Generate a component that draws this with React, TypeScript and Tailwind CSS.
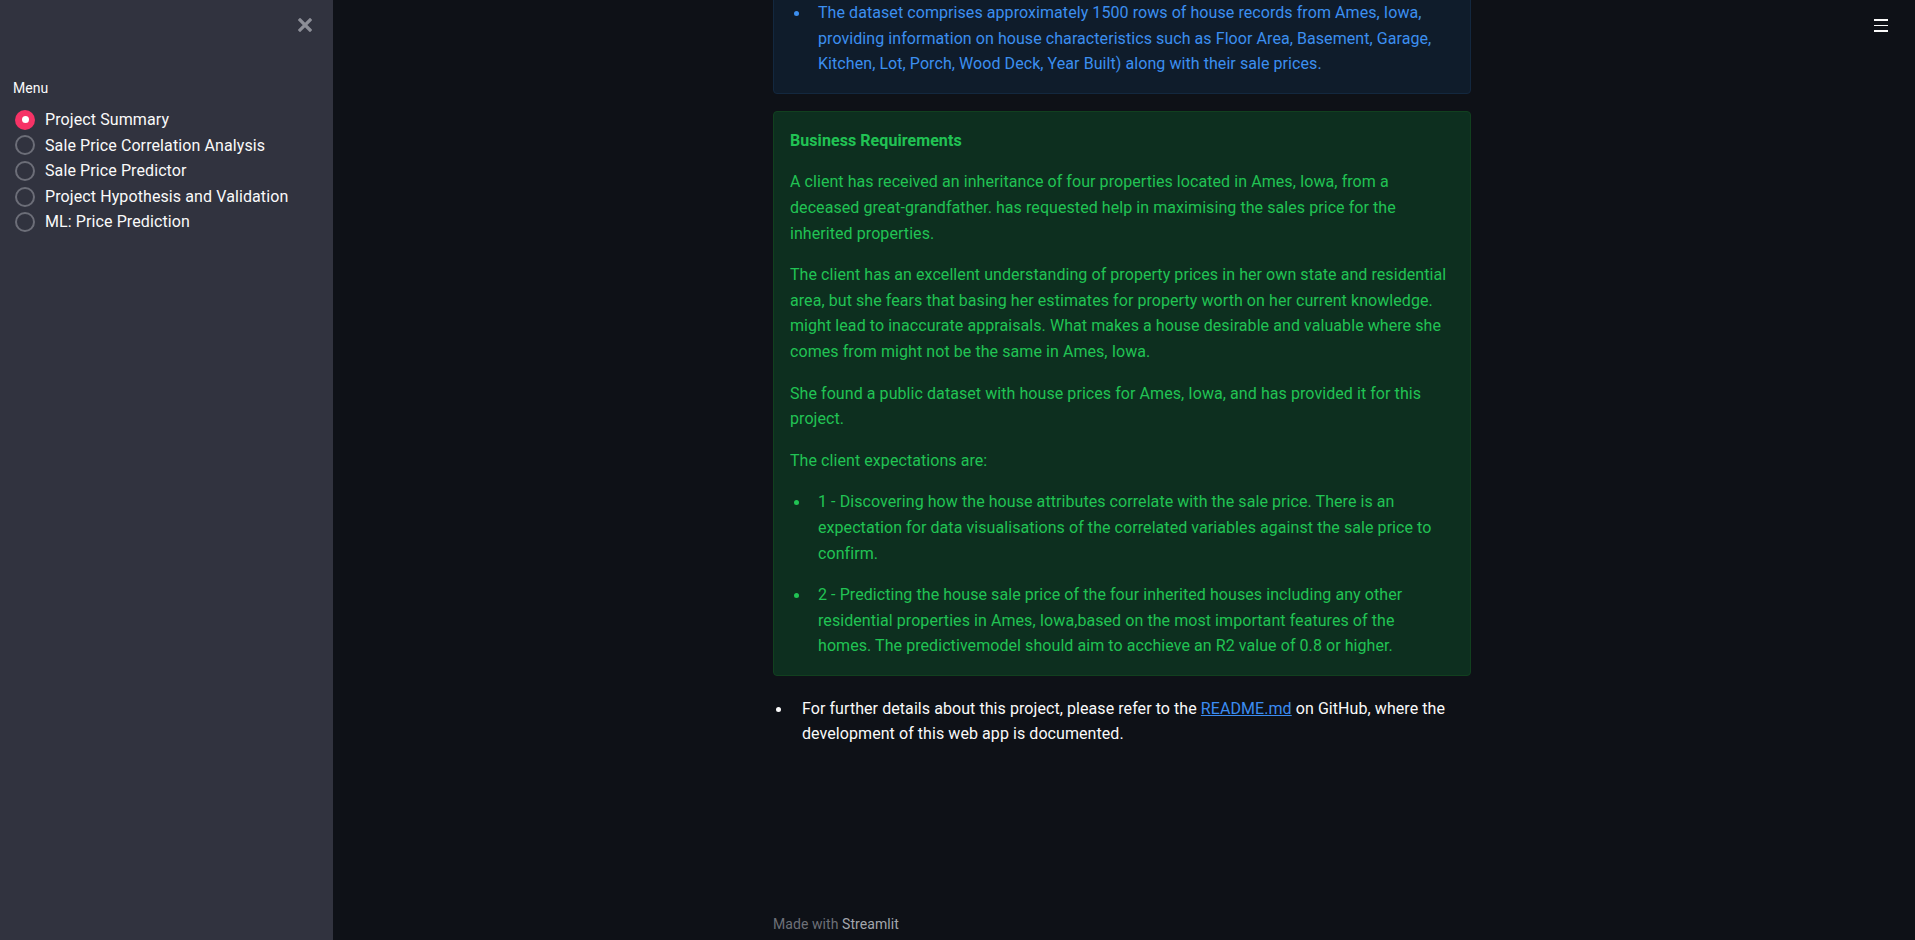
import React from "react";

const menuItems = [
  "Project Summary",
  "Sale Price Correlation Analysis",
  "Sale Price Predictor",
  "Project Hypothesis and Validation",
  "ML: Price Prediction",
];

const Bullet = ({ color, children }: { color: string; children: React.ReactNode }) => (
  <li className="flex">
    <span className="w-[28px] shrink-0 pl-[4px] pt-[11px]">
      <span className={`block h-[5px] w-[5px] rounded-full ${color}`} />
    </span>
    <span className="pr-[14px]">{children}</span>
  </li>
);

const Sidebar = () => {
  return (
    <aside className="w-[333px] shrink-0 h-screen bg-[#31333f] flex flex-col px-[13px] pt-[18px]">
      {/* close */}
      <div className="flex justify-end pr-[8px]">
        <svg width="14" height="14" viewBox="0 0 14 14" className="text-[#8c8e97]">
          <path d="M2 2L12 12M12 2L2 12" stroke="currentColor" strokeWidth="3.2" strokeLinecap="square" />
        </svg>
      </div>

      <p className="mt-[46px] text-[14px] leading-[20px] text-[#fafafa]">Menu</p>

      <div className="mt-[9px] flex flex-col">
        {menuItems.map((item, i) => (
          <div key={item} className="h-[25.6px] flex items-center gap-[10px] pl-[2px]">
            {i === 0 ? (
              <span className="w-[20px] h-[20px] rounded-full bg-[#f63366] flex items-center justify-center">
                <span className="w-[7px] h-[7px] rounded-full bg-white" />
              </span>
            ) : (
              <span className="w-[20px] h-[20px] rounded-full border-2 border-[#6c6e78]" />
            )}
            <span className="text-[16px] tracking-[0.1px] text-[#fafafa]">{item}</span>
          </div>
        ))}
      </div>
    </aside>
  );
};

export default function App() {
  return (
    <div className="flex h-screen overflow-hidden bg-[#0e1117] font-['Roboto',sans-serif] text-[16px] leading-[25.6px]">
      <Sidebar />

      <main className="relative flex-1 flex flex-col pr-[4px]">
        {/* header menu */}
        <div className="absolute right-[27px] top-[19px] flex flex-col gap-[4px]">
          <span className="block w-[14px] h-[1.6px] bg-[#fafafa]" />
          <span className="block w-[14px] h-[1.6px] bg-[#fafafa]" />
          <span className="block w-[14px] h-[1.6px] bg-[#fafafa]" />
        </div>

        <div className="mx-auto w-[698px] flex-1 flex flex-col tracking-[0.07px]">
          {/* Dataset info */}
          <div className="mt-[-17px] rounded-[4px] border border-[#13283f] bg-[#0f1c2b] px-[16px] py-[16px] text-[#3c8ff0]">
            <ul>
              <Bullet color="bg-[#3c8ff0]">
                The dataset comprises approximately 1500 rows of house records from Ames, Iowa,
                providing information on house characteristics such as Floor Area, Basement, Garage,
                Kitchen, Lot, Porch, Wood Deck, Year Built) along with their sale prices.
              </Bullet>
            </ul>
          </div>

          {/* Business requirements */}
          <div className="mt-[17px] rounded-[4px] border border-[#11401f] bg-[#0d2f1f] px-[16px] py-[16px] text-[#21c354]">
            <p className="font-bold mb-[16px]">Business Requirements</p>
            <p className="mb-[16px]">
              A client has received an inheritance of four properties located in Ames, Iowa, from a
              deceased great-grandfather. has requested help in maximising the sales price for the
              inherited properties.
            </p>
            <p className="mb-[16px]">
              The client has an excellent understanding of property prices in her own state and residential
              area, but she fears that basing her estimates for property worth on her current knowledge.
              might lead to inaccurate appraisals. What makes a house desirable and valuable where she
              comes from might not be the same in Ames, Iowa.
            </p>
            <p className="mb-[16px]">
              She found a public dataset with house prices for Ames, Iowa, and has provided it for this
              project.
            </p>
            <p className="mb-[16px]">The client expectations are:</p>
            <ul className="flex flex-col gap-[16px]">
              <Bullet color="bg-[#21c354]">
                1 - Discovering how the house attributes correlate with the sale price. There is an
                expectation for data visualisations of the correlated variables against the sale price to
                confirm.
              </Bullet>
              <Bullet color="bg-[#21c354]">
                2 - Predicting the house sale price of the four inherited houses including any other
                residential properties in Ames, Iowa,based on the most important features of the
                homes. The predictivemodel should aim to acchieve an R2 value of 0.8 or higher.
              </Bullet>
            </ul>
          </div>

          {/* Further details */}
          <ul className="mt-[20px] text-[#fafafa] pr-[16px]">
            <li className="flex">
              <span className="w-[29px] shrink-0 pl-[3px] pt-[11px]">
                <span className="block h-[5px] w-[5px] rounded-full bg-[#fafafa]" />
              </span>
              <p>
                For further details about this project, please refer to the{" "}
                <a className="text-[#3b8cf2] underline">README.md</a> on GitHub, where the
                development of this web app is documented.
              </p>
            </li>
          </ul>

          {/* Footer */}
          <footer className="mt-auto pb-[6px] text-[14px] leading-[20px]">
            <span className="text-[#6d7077]">Made with </span>
            <span className="text-[#a3a6ad]">Streamlit</span>
          </footer>
        </div>
      </main>
    </div>
  );
}
